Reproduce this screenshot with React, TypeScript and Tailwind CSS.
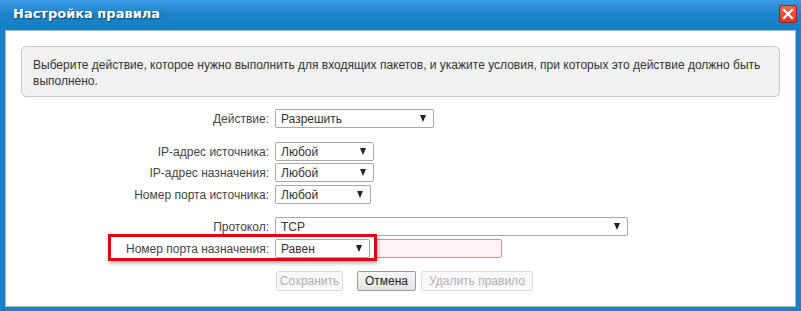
import React from "react";

function Select({ value, width }: { value: string; width: number }) {
  return (
    <div
      className="relative h-[19px] border border-[#a9a9a9] rounded-[2px] bg-white flex items-center pl-[5px] text-[12px] text-[#333]"
      style={{ width }}
    >
      <span>{value}</span>
      <span className="absolute right-[7px] top-[5px] w-0 h-0 border-l-[3.5px] border-r-[3.5px] border-t-[7px] border-l-transparent border-r-transparent border-t-[#222]" />
    </div>
  );
}

function Row({ label, children, className = "" }: { label: string; children: React.ReactNode; className?: string }) {
  return (
    <div className={"flex items-center h-[19px] " + className}>
      <div className="w-[264px] text-right pr-[1px] text-[12px] text-[#444]">{label}</div>
      <div className="ml-[5px] flex items-center">{children}</div>
    </div>
  );
}

export default function App() {
  return (
    <div
      className="w-[801px] h-[311px] bg-[#1a81c8] flex flex-col overflow-hidden"
      style={{ fontFamily: '"Liberation Sans", Arial, sans-serif' }}
    >
      <div className="h-[30px] flex items-center relative bg-gradient-to-b from-[#3a9ce4] via-[#1a82c8] to-[#167ec4]">
        <span
          className="ml-[13px] text-white text-[13px] font-bold mt-[-2px]"
          style={{ fontFamily: '"DejaVu Sans", Verdana, sans-serif', textShadow: "1px 1px 1px rgba(0,0,0,0.45)" }}
        >
          Настройка правила
        </span>
        <div className="absolute left-[779px] top-[5px] w-[18px] h-[18px] rounded-[2px] border border-[#b01a0e] bg-gradient-to-b from-[#f06a4e] to-[#d7361f] flex items-center justify-center">
          <svg width="12" height="12" viewBox="0 0 12 12">
            <path d="M2 2 L10 10 M10 2 L2 10" stroke="white" strokeWidth="2.2" strokeLinecap="square" />
          </svg>
        </div>
      </div>
      <div className="relative mx-[5px] h-[277px] bg-white border border-[#b5b5b5] pl-[15px] pt-[15px]">
        <div className="w-[759px] h-[51px] bg-[#f1f1f1] border border-[#c8c8c8] rounded-[5px] pl-[11px] pt-[10px] text-[12px] leading-[16px] text-[#333]">
          Выберите действие, которое нужно выполнить для входящих пакетов, и укажите условия, при которых это действие должно быть
          <br />
          выполнено.
        </div>
        <div className="-ml-[15px] mt-[12px] flex flex-col">
          <Row label="Действие:">
            <Select value="Разрешить" width={159} />
          </Row>
          <Row label="IP-адрес источника:" className="mt-[14px]">
            <Select value="Любой" width={99} />
          </Row>
          <Row label="IP-адрес назначения:" className="mt-[2px]">
            <Select value="Любой" width={99} />
          </Row>
          <Row label="Номер порта источника:" className="mt-[3px]">
            <Select value="Любой" width={96} />
          </Row>
          <Row label="Протокол:" className="mt-[13px]">
            <Select value="TCP" width={353} />
          </Row>
          <Row label="Номер порта назначения:" className="mt-[3px]">
            <Select value="Равен" width={95} />
            <div className="ml-[5px] w-[127px] h-[19px] border border-[#f08a8a] rounded-[2px] bg-[#fff7f7]" />
          </Row>
          <div className="flex mt-[13px] ml-[270px] text-[12px]">
            <div className="h-[20px] w-[67px] flex items-center justify-center border border-[#dcdcdc] rounded-[2px] bg-[#f8f8f8] text-[#b0b0b0]">
              Сохранить
            </div>
            <div className="ml-[14px] h-[20px] w-[59px] flex items-center justify-center border border-[#9a9a9a] rounded-[2px] bg-gradient-to-b from-[#f8f8f8] to-[#e2e2e2] text-[#222]">
              Отмена
            </div>
            <div className="ml-[5px] h-[20px] w-[112px] flex items-center justify-center border border-[#dcdcdc] rounded-[2px] bg-[#f8f8f8] text-[#b0b0b0]">
              Удалить правило
            </div>
          </div>
        </div>
        <div
          className="absolute left-[102px] top-[203px] w-[269px] h-[27px] border-[3px] border-[#e8000b]"
          style={{ boxShadow: "1px 2px 4px rgba(0,0,0,0.35)" }}
        />
      </div>
    </div>
  );
}
